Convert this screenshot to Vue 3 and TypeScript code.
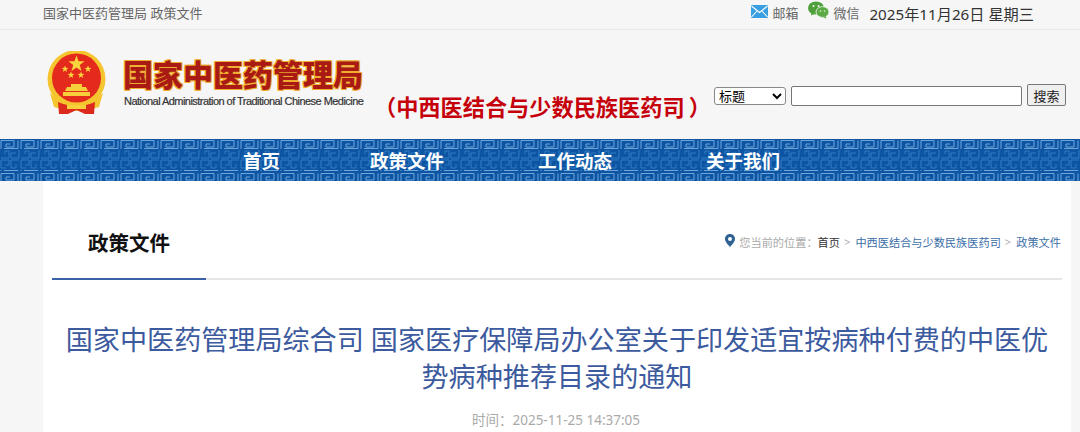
<script setup lang="ts">
const navItems = ['首页', '政策文件', '工作动态', '关于我们']
const starPoints = '0,-10 2.4,-3.2 9.5,-3.1 3.8,1.2 5.9,8.1 0,4 -5.9,8.1 -3.8,1.2 -9.5,-3.1 -2.4,-3.2'
const smallStars = [
  { x: 18, y: 18 },
  { x: 41, y: 18 },
  { x: 24, y: 24 },
  { x: 34, y: 24 }
]
</script>

<template>
  <div class="page">
    <div class="top-bar">
      <div class="top-left">国家中医药管理局 政策文件</div>
      <div class="top-right">
        <svg class="mail-icon" width="17" height="13" viewBox="0 0 17 13">
          <rect width="17" height="13" rx="1" fill="#3a9fe0" />
          <path d="M0.5 1 L8.5 7.5 L16.5 1 M0.5 12 L6 6 M16.5 12 L11 6" fill="none" stroke="#fff" stroke-width="1.1" />
        </svg>
        <span class="top-link">邮箱</span>
        <svg class="wechat-icon" width="21" height="18" viewBox="0 0 21 18">
          <ellipse cx="8" cy="7" rx="8" ry="6.6" fill="#4f9f3a" />
          <path d="M3.5 11 L3 14.5 L7 12.5 Z" fill="#4f9f3a" />
          <ellipse cx="14.5" cy="11" rx="6.5" ry="5.4" fill="#5aab44" stroke="#f6f6f6" stroke-width="0.8" />
          <path d="M17.5 15 L18.5 17.5 L14.5 16 Z" fill="#5aab44" />
          <circle cx="5.5" cy="5" r="1" fill="#f6f6f6" />
          <circle cx="10.5" cy="5" r="1" fill="#f6f6f6" />
          <circle cx="12.5" cy="10" r="0.8" fill="#f6f6f6" />
          <circle cx="16.5" cy="10" r="0.8" fill="#f6f6f6" />
        </svg>
        <span class="top-link">微信</span>
        <span class="top-date">2025年11月26日 星期三</span>
      </div>
    </div>

    <div class="header">
      <svg class="emblem" width="60" height="64" viewBox="0 0 60 64">
        <circle cx="29.5" cy="28" r="29" fill="#f4c52e" />
        <circle cx="29.5" cy="27" r="24.5" fill="#e42a1c" />
        <polygon :points="starPoints" fill="#f9d63d" transform="translate(29.5 13) scale(0.85)" />
        <polygon
          v-for="star in smallStars"
          :key="star.x"
          :points="starPoints"
          fill="#f9d63d"
          :transform="`translate(${star.x} ${star.y}) scale(0.36)`"
        />
        <path d="M24 33 H35 V36 H24 Z M20 36 H39 L41 40 H18 Z M16 41 H43 V45 H16 Z" fill="#f6cf3b" />
        <path d="M3 42 Q12 52 29.5 52 Q47 52 56 42 L52 56 Q40 60 29.5 60 Q19 60 7 56 Z" fill="#f4c52e" />
        <path d="M11 51 Q20 55 29.5 55 Q39 55 48 51 L47 63 H38 L29.5 59 L21 63 H12 Z" fill="#dc2a1c" />
        <path d="M20 54 H39 V58 H20 Z" fill="#f6cf3b" />
      </svg>
      <div class="brand">
        <div class="brand-cn">国家中医药管理局</div>
        <div class="brand-en">National Administration of Traditional Chinese Medicine</div>
      </div>
      <div class="department">（中西医结合与少数民族医药司<span class="paren-end">）</span></div>
      <form class="search" @submit.prevent>
        <select class="search-type">
          <option>标题</option>
        </select>
        <input class="search-input" type="text">
        <button class="search-btn" type="button">搜索</button>
      </form>
    </div>

    <div class="nav">
      <svg class="nav-pattern" width="1080" height="42">
        <defs>
          <pattern id="keyBand" width="20" height="11" patternUnits="userSpaceOnUse">
            <path
              d="M1 10 V1.5 H14 V8 H6 V5 H10 M18 1.5 V9.5 H4"
              fill="none"
              stroke="#6ea6dc"
              stroke-width="1"
            />
          </pattern>
          <pattern id="keyMid" width="20" height="20" patternUnits="userSpaceOnUse">
            <path
              d="M1 1 H9 V6 H5 M1 1 V9 H6 M19 1 H11 V9 H16 V5 M1 19 H9 V12 H5 V15 M19 19 H11 V14 H16 M19 19 V11"
              fill="none"
              stroke="#3079c4"
              stroke-width="1"
            />
          </pattern>
        </defs>
        <rect width="1080" height="42" fill="#0d55a3" />
        <rect y="11" width="1080" height="20" fill="url(#keyMid)" />
        <rect width="1080" height="11" fill="url(#keyBand)" />
        <rect y="31" width="1080" height="11" fill="url(#keyBand)" />
      </svg>
      <a v-for="item in navItems" :key="item" class="nav-item">{{ item }}</a>
    </div>

    <div class="card">
      <div class="column-head">
        <div class="column-tab">政策文件</div>
        <div class="crumbs">
          <svg class="pin" width="10" height="13" viewBox="0 0 10 13">
            <path d="M5 0 C2 0 0 2.2 0 5 C0 8 3.5 11 5 13 C6.5 11 10 8 10 5 C10 2.2 8 0 5 0 Z M5 3 A2 2 0 1 1 5 7 A2 2 0 1 1 5 3 Z" fill="#2d6293" fill-rule="evenodd" />
          </svg>
          <span class="crumb-label">您当前的位置：</span>
          <span class="crumb-home">首页</span>
          <span class="crumb-sep">&gt;</span>
          <span class="crumb-link">中西医结合与少数民族医药司</span>
          <span class="crumb-sep">&gt;</span>
          <span class="crumb-link">政策文件</span>
        </div>
      </div>
      <h1 class="title">国家中医药管理局综合司 国家医疗保障局办公室关于印发适宜按病种付费的中医优势病种推荐目录的通知</h1>
      <div class="meta">时间：2025-11-25 14:37:05</div>
    </div>
  </div>
</template>

<style>
html,
body {
  height: 432px;
  overflow: hidden;
  background: #f6f6f6;
}
</style>

<style scoped>
.page {
  font-family: "Noto Sans", "Noto Sans CJK SC", sans-serif;
  width: 1080px;
  background: #f6f6f6;
}

.top-bar {
  display: flex;
  justify-content: space-between;
  align-items: center;
  box-sizing: border-box;
  height: 30px;
  padding: 0 46px 4px 43px;
  border-bottom: 1px solid #e9e9e9;
  font-size: 13px;
  color: #666;
}

.top-right {
  display: flex;
  align-items: center;
}

.mail-icon {
  margin: -3px 4px 0 0;
}

.wechat-icon {
  margin: -6px 4px 0 10px;
}

.top-date {
  margin-left: 10px;
  font-size: 15.2px;
  color: #333;
}

.header {
  display: flex;
  height: 109px;
  padding-left: 47px;
}

.emblem {
  margin-top: 21px;
  flex-shrink: 0;
}

.brand {
  margin: 28px 0 0 16px;
  width: 241px;
}

.brand-cn {
  font-size: 30px;
  line-height: 34px;
  font-weight: 900;
  white-space: nowrap;
  color: #a91a14;
  text-shadow: 1px 1px 0 #f0ad30, -1px -1px 0 #f0ad30, 1px -1px 0 #f0ad30, -1px 1px 0 #f0ad30;
}

.brand-en {
  margin-top: 2px;
  margin-left: 1px;
  font-family: "Liberation Sans", sans-serif;
  font-size: 11px;
  line-height: 14px;
  letter-spacing: -0.54px;
  white-space: nowrap;
  color: #333;
  -webkit-text-stroke: 0.2px #333;
}

.department {
  margin: 62px 0 0 10px;
  font-size: 22.2px;
  line-height: 32px;
  font-weight: 700;
  color: #c5000b;
  white-space: nowrap;
  width: 330px;
}

.paren-end {
  margin-left: 4px;
}

.search {
  display: flex;
  align-items: flex-start;
  gap: 5px;
  margin: 54px 0 0 auto;
  padding-right: 14px;
}

.search-type {
  width: 72px;
  height: 18px;
  margin-top: 3px;
  padding: 0;
  font: 13px "Liberation Sans", "Noto Sans CJK SC", sans-serif;
  background: #fff;
  border: 1px solid #888;
  border-radius: 3px;
}

.search-input {
  box-sizing: border-box;
  width: 231px;
  height: 20px;
  margin-top: 2px;
  border: 1px solid #777;
  border-radius: 2px;
  background: #fff;
}

.search-btn {
  box-sizing: border-box;
  width: 39px;
  height: 22px;
  padding: 0;
  font: 13px "Liberation Sans", "Noto Sans CJK SC", sans-serif;
  color: #222;
  background: #efefef;
  border: 1px solid #777;
  border-radius: 2px;
}

.nav {
  position: relative;
  display: grid;
  grid-template-columns: 127px 168px 168px auto;
  align-items: center;
  height: 42px;
  padding-left: 243px;
  overflow: hidden;
}

.nav-pattern {
  position: absolute;
  left: 0;
  top: 0;
}

.nav-item {
  position: relative;
  font-size: 18.5px;
  font-weight: 700;
  color: #fff;
}

.card {
  width: 1028px;
  height: 251px;
  margin-left: 43px;
  padding: 0 9px;
  box-sizing: border-box;
  background: #fff;
}

.column-head {
  display: flex;
  justify-content: space-between;
  align-items: center;
  box-sizing: border-box;
  height: 99px;
  padding-top: 24px;
  border-bottom: 2px solid #e6e6e6;
}

.column-tab {
  box-sizing: border-box;
  align-self: stretch;
  width: 154px;
  margin-bottom: -2px;
  padding-top: 25px;
  border-bottom: 2px solid #3b62a8;
  font-size: 20.5px;
  line-height: 26px;
  font-weight: 700;
  color: #111;
  text-align: center;
}

.crumbs {
  display: flex;
  align-items: center;
  margin-right: 1px;
  font-size: 11.2px;
  color: #aaa;
}

.pin {
  margin: -3px 4px 0 0;
}

.crumb-home {
  color: #333;
}

.crumb-sep {
  margin: 0 5px 0 4px;
}

.crumb-link {
  color: #3a6ea8;
}

.title {
  margin: 41px 0 0;
  padding: 0 5px;
  font-size: 27.1px;
  line-height: 37px;
  font-weight: 400;
  color: #3c5a9e;
  text-align: center;
}

.meta {
  margin-top: 16px;
  margin-right: 2px;
  font-size: 13.5px;
  line-height: 18px;
  color: #aaa;
  text-align: center;
}
</style>
